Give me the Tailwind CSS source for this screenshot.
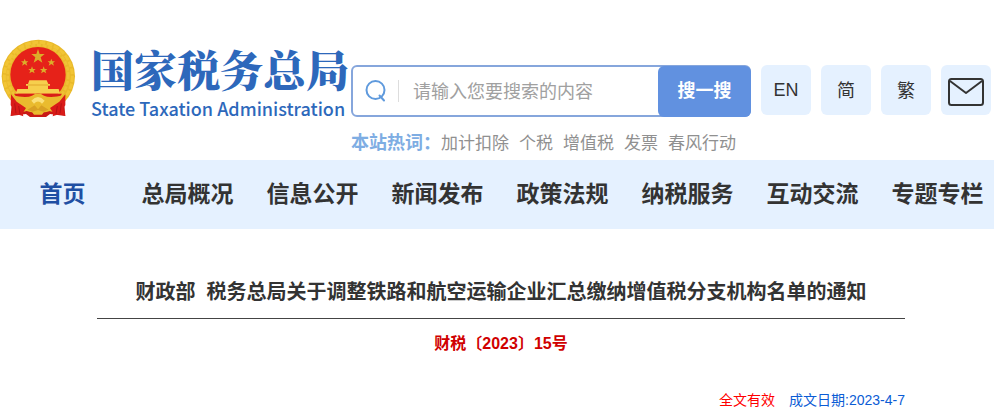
<!DOCTYPE html>
<html lang="zh-CN">
<head>
    <meta charset="UTF-8">
    <meta name="viewport" content="width=device-width, initial-scale=1.0">
    <title>国家税务总局</title>
    <script src="https://cdn.jsdelivr.net/npm/@tailwindcss/browser@4"></script>
</head>
<body class="bg-white text-[#333] font-['Liberation_Sans','Noto_Sans_CJK_SC',sans-serif] overflow-x-hidden">

    <header class="flex items-start pt-[30px] h-40">
        <a href="#" class="flex w-[351px] shrink-0" aria-label="国家税务总局">
            <!-- National emblem -->
            <svg class="w-[76px] h-[90px] shrink-0" viewBox="0 0 228 270" aria-hidden="true">
                <path d="M36 212 L192 212 L196 258 L150 252 L138 261 L90 261 L78 252 L32 258Z" fill="#c91a16"/>
                <circle cx="115" cy="139" r="110" fill="#e9b92a"/>
                <circle cx="115" cy="139" r="102" fill="none" stroke="#f2c535" stroke-width="9" stroke-dasharray="17 5"/>
                <circle cx="114" cy="136" r="91" fill="none" stroke="#f0c236" stroke-width="8" stroke-dasharray="12 5"/>
                <circle cx="114" cy="134" r="83" fill="#e62219"/>
                <g fill="#dcae2a">
                    <path d="M114 57 L119 72 L134 72 L122 82 L127 98 L114 89 L101 98 L106 82 L94 72 L109 72Z"/>
                    <path id="star" d="M74 86 L77 94 L85 94 L79 99 L82 107 L74 102 L66 107 L69 99 L63 94 L71 94Z"/>
                    <use href="#star" x="80"/>
                    <use href="#star" x="22" y="23"/>
                    <use href="#star" x="57" y="23"/>
                </g>
                <path d="M88 151 H140 L145 162 H150 V167 H144 V177 H176 L180 191 H47 L52 177 H84 V167 H78 V162 H84Z" fill="#f6cf4d"/>
                <path d="M84 165 H144" stroke="#e0a72c" stroke-width="3"/>
                <path d="M42 191 H186 L175 207 Q145 205 133 196 Q114 184 95 196 Q80 206 53 207Z" fill="#d91f17"/>
                <path d="M36 196 Q80 206 96 197 Q114 184 132 197 Q148 206 192 196 Q182 220 150 232 L160 246 L136 240 L126 254 H102 L92 240 L68 246 L78 232 Q48 222 36 196Z" fill="#eabb2e"/>
                <path d="M94 212 Q114 190 134 212 L126 221 Q114 208 102 221Z" fill="#fbe07a"/>
                <path d="M82 239 L104 226 L114 238 L124 226 L146 239 L130 245 L114 240 L98 245Z" fill="#d9a024"/>
                <path d="M33 193 L50 215 L78 234 L68 250 L70 259 L52 253 L32 257 L39 235 L32 226Z" fill="#d91b18"/>
                <path d="M196 193 L178 215 L150 234 L160 250 L158 259 L176 253 L196 257 L189 235 L196 226Z" fill="#d91b18"/>
                <path d="M44 220 L48 250 M56 228 L60 252 M184 220 L180 250 M172 228 L168 252" stroke="#b51215" stroke-width="3" fill="none"/>
            </svg>
            <span class="flex flex-col pl-[15px] pt-3 whitespace-nowrap text-[#2d68bb]">
                <span class="font-['Noto_Serif_CJK_SC','Noto_Sans_CJK_SC',serif] font-black text-[43px] leading-[54px]">国家税务总局</span>
                <span class="font-['Noto_Sans_CJK_SC',sans-serif] font-medium text-lg leading-6">State Taxation Administration</span>
            </span>
        </a>

        <div class="w-[400px] shrink-0 pt-[35px]">
            <form class="flex items-center h-[52px] rounded-md border-2 border-[#86a6dc]" onsubmit="return false">
                <label for="search" class="flex items-center pl-3" aria-label="搜索">
                    <svg class="w-[22px] h-[22px]" viewBox="0 0 22 22" fill="none" stroke="#5f9add" stroke-width="2" stroke-linecap="round">
                        <circle cx="10.5" cy="10" r="9"/>
                        <path d="M14.5 15.5 L19 20.5"/>
                    </svg>
                </label>
                <span class="w-px h-[22px] ml-[11px] bg-[#ddd]"></span>
                <input id="search" type="text" placeholder="请输入您要搜索的内容" class="flex-1 min-w-0 px-3.5 pb-0.5 text-lg outline-none placeholder:text-[#a0a0a0] font-['Noto_Sans_CJK_SC',sans-serif]">
                <button type="submit" class="w-[93px] h-[51px] -mr-0.5 rounded-md bg-[#6191e0] text-white text-lg font-bold">搜一搜</button>
            </form>
            <p class="flex items-center pt-3 text-[17px] leading-[26px] whitespace-nowrap text-[#909090]">
                <strong class="w-[90px] font-bold text-lg leading-[26px] text-[#7eade3]">本站热词：</strong>
                <span class="flex gap-2.5 pb-0.5 font-['Noto_Sans_CJK_SC',sans-serif]">
                    <a href="#">加计扣除</a>
                    <a href="#">个税</a>
                    <a href="#">增值税</a>
                    <a href="#">发票</a>
                    <a href="#">春风行动</a>
                </span>
            </p>
        </div>

        <div class="flex gap-2.5 pl-2.5 pt-[35px] text-lg">
            <a href="#" class="flex items-center justify-center size-[50px] rounded-md bg-[#e5f1ff]">EN</a>
            <a href="#" class="flex items-center justify-center size-[50px] pb-0.5 rounded-md bg-[#e5f1ff] font-['Noto_Sans_CJK_SC',sans-serif]">简</a>
            <a href="#" class="flex items-center justify-center size-[50px] pb-0.5 rounded-md bg-[#e5f1ff] font-['Noto_Sans_CJK_SC',sans-serif]">繁</a>
            <a href="#" class="flex items-center justify-center size-[50px] pt-1 rounded-md bg-[#e5f1ff]" aria-label="邮箱">
                <svg class="w-9 h-7" viewBox="0 0 36 28" fill="none" stroke="#333" stroke-width="2" stroke-linejoin="round">
                    <rect x="1" y="1" width="34" height="26" rx="2.5"/>
                    <path d="M2 3 L18 15 L34 3"/>
                </svg>
            </a>
        </div>
    </header>

    <nav class="flex h-[69px] bg-[#e5f1ff] text-[23px] font-bold overflow-hidden">
        <a href="#" class="flex items-center justify-center w-[125px] shrink-0 text-[#1f4fa3]">首页</a>
        <a href="#" class="flex items-center justify-center w-[125px] shrink-0">总局概况</a>
        <a href="#" class="flex items-center justify-center w-[125px] shrink-0">信息公开</a>
        <a href="#" class="flex items-center justify-center w-[125px] shrink-0">新闻发布</a>
        <a href="#" class="flex items-center justify-center w-[125px] shrink-0">政策法规</a>
        <a href="#" class="flex items-center justify-center w-[125px] shrink-0">纳税服务</a>
        <a href="#" class="flex items-center justify-center w-[125px] shrink-0">互动交流</a>
        <a href="#" class="flex items-center justify-center w-[125px] shrink-0">专题专栏</a>
    </nav>

    <main class="pl-[97px] pr-[89px] pt-[47px]">
        <h1 class="pb-2.5 border-b border-[#444] text-center text-xl leading-8 font-bold whitespace-pre">财政部  税务总局关于调整铁路和航空运输企业汇总缴纳增值税分支机构名单的通知</h1>
        <p class="pt-[13px] text-center text-base leading-6 font-bold text-[#d00000]">财税〔2023〕15号</p>
        <p class="flex justify-end gap-3.5 pt-8 text-sm leading-6">
            <span class="text-[#f00]">全文有效</span>
            <span class="text-[#0b5cd5]">成文日期:2023-4-7</span>
        </p>
    </main>

</body>
</html>
